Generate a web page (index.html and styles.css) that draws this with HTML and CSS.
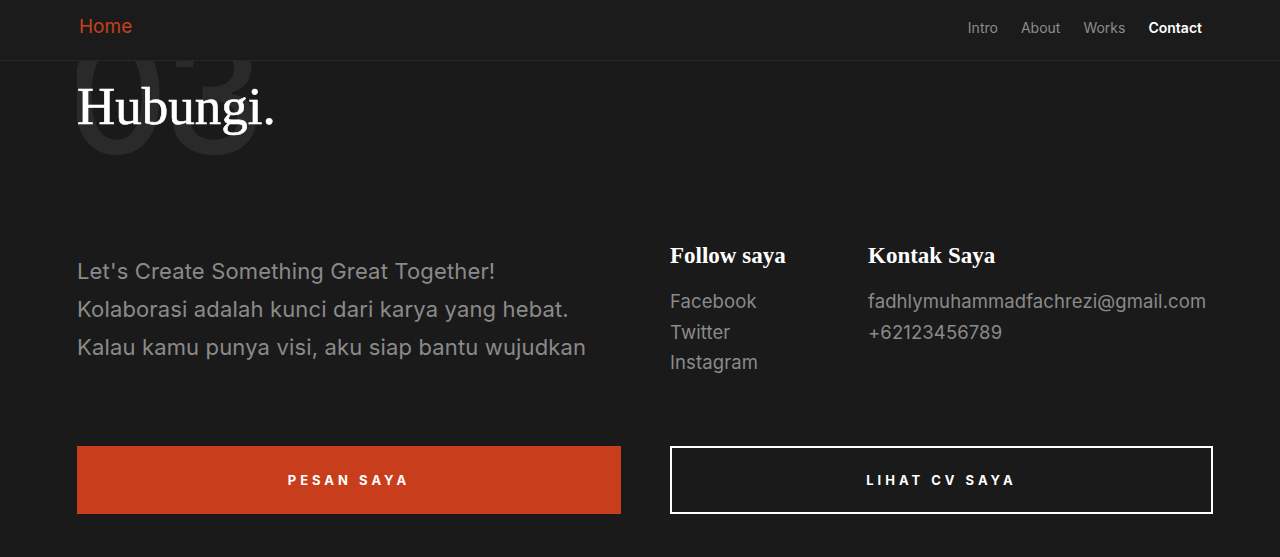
FILE: index.html
```html
<!DOCTYPE html>
<html lang="id">
<head>
<meta charset="utf-8">
<title>Hubungi</title>
<link rel="stylesheet" href="styles.css">
</head>
<body>
<header class="topbar">
  <a class="brand" href="#">Home</a>
  <nav class="nav">
    <a href="#">Intro</a>
    <a href="#">About</a>
    <a href="#">Works</a>
    <a class="active" href="#">Contact</a>
  </nav>
</header>
<main class="contact">
  <div class="title-wrap">
    <span class="bignum" aria-hidden="true">03</span>
    <h1 class="title">Hubungi.</h1>
  </div>
  <div class="grid">
    <p class="lead">Let's Create Something Great Together!<br>Kolaborasi adalah kunci dari karya yang hebat.<br>Kalau kamu punya visi, aku siap bantu wujudkan</p>
    <div class="info">
      <div class="col follow">
        <h3>Follow saya</h3>
        <ul>
          <li>Facebook</li>
          <li>Twitter</li>
          <li>Instagram</li>
        </ul>
      </div>
      <div class="col">
        <h3>Kontak Saya</h3>
        <ul>
          <li>fadhlymuhammadfachrezi@gmail.com</li>
          <li>+62123456789</li>
        </ul>
      </div>
    </div>
    <a class="btn btn-fill" href="#">PESAN SAYA</a>
    <a class="btn btn-outline" href="#">LIHAT CV SAYA</a>
  </div>
</main>
</body>
</html>
```
FILE: styles.css
```css
* { box-sizing: border-box; }
html, body { margin: 0; padding: 0; }
body {
  background: #1a1a1a;
  color: #8a8a8a;
  font-family: Inter, "Liberation Sans", sans-serif;
  height: 557px;
  overflow: hidden;
}
a { text-decoration: none; color: inherit; }

.topbar {
  position: relative;
  z-index: 2;
  height: 61px;
  background: #1b1b1b;
  border-bottom: 1px solid #262626;
  display: flex;
  align-items: center;
  justify-content: space-between;
  padding: 0 78px 6px 79px;
}
.brand {
  color: #c6401f;
  font-size: 19px;
  padding-bottom: 2px;
}
.nav { display: flex; gap: 23px; }
.nav a { font-size: 14px; color: #8c8c8c; }
.nav a.active { color: #fff; font-weight: 600; }

.contact { padding: 0 67px 0 77px; }

.title-wrap {
  position: relative;
  height: 120px;
  margin-bottom: -40px;
  overflow: hidden;
}
.bignum {
  position: absolute;
  left: -12px;
  top: -46px;
  font-family: Inter, sans-serif;
  font-size: 160px;
  line-height: 1;
  font-weight: 500;
  color: #2a2a2a;
  z-index: 0;
  letter-spacing: -4px;
}
.title {
  position: relative;
  z-index: 1;
  margin: 0;
  padding-top: 15px;
  font-family: "Liberation Serif", serif;
  font-weight: 400;
  font-size: 53px;
  line-height: 60px;
  color: #fff;
  -webkit-text-stroke: 0.6px #fff;
}

.grid {
  display: grid;
  grid-template-columns: 544px 543px;
  column-gap: 49px;
  padding-top: 101px;
}
.lead {
  margin: 0;
  padding-top: 10px;
  font-size: 22px;
  letter-spacing: 0.15px;
  line-height: 38px;
  color: #8a8a8a;
}
.info { display: flex; }
.follow { width: 198px; }
.col h3 {
  margin: 0 0 16px;
  font-family: "Liberation Serif", serif;
  font-weight: 700;
  font-size: 23px;
  line-height: 28px;
  color: #fff;
}
.col ul { list-style: none; margin: 0; padding: 0; }
.col li { font-size: 18.5px; letter-spacing: 0.1px; line-height: 30.5px; color: #8a8a8a; }

.btn {
  margin-top: 68px;
  height: 68px;
  display: flex;
  align-items: center;
  justify-content: center;
  font-size: 13px;
  font-weight: 700;
  letter-spacing: 4px;
  color: #fff;
}
.btn-fill { background: #c83e1d; }
.btn-outline { border: 2px solid #fff; }
```
